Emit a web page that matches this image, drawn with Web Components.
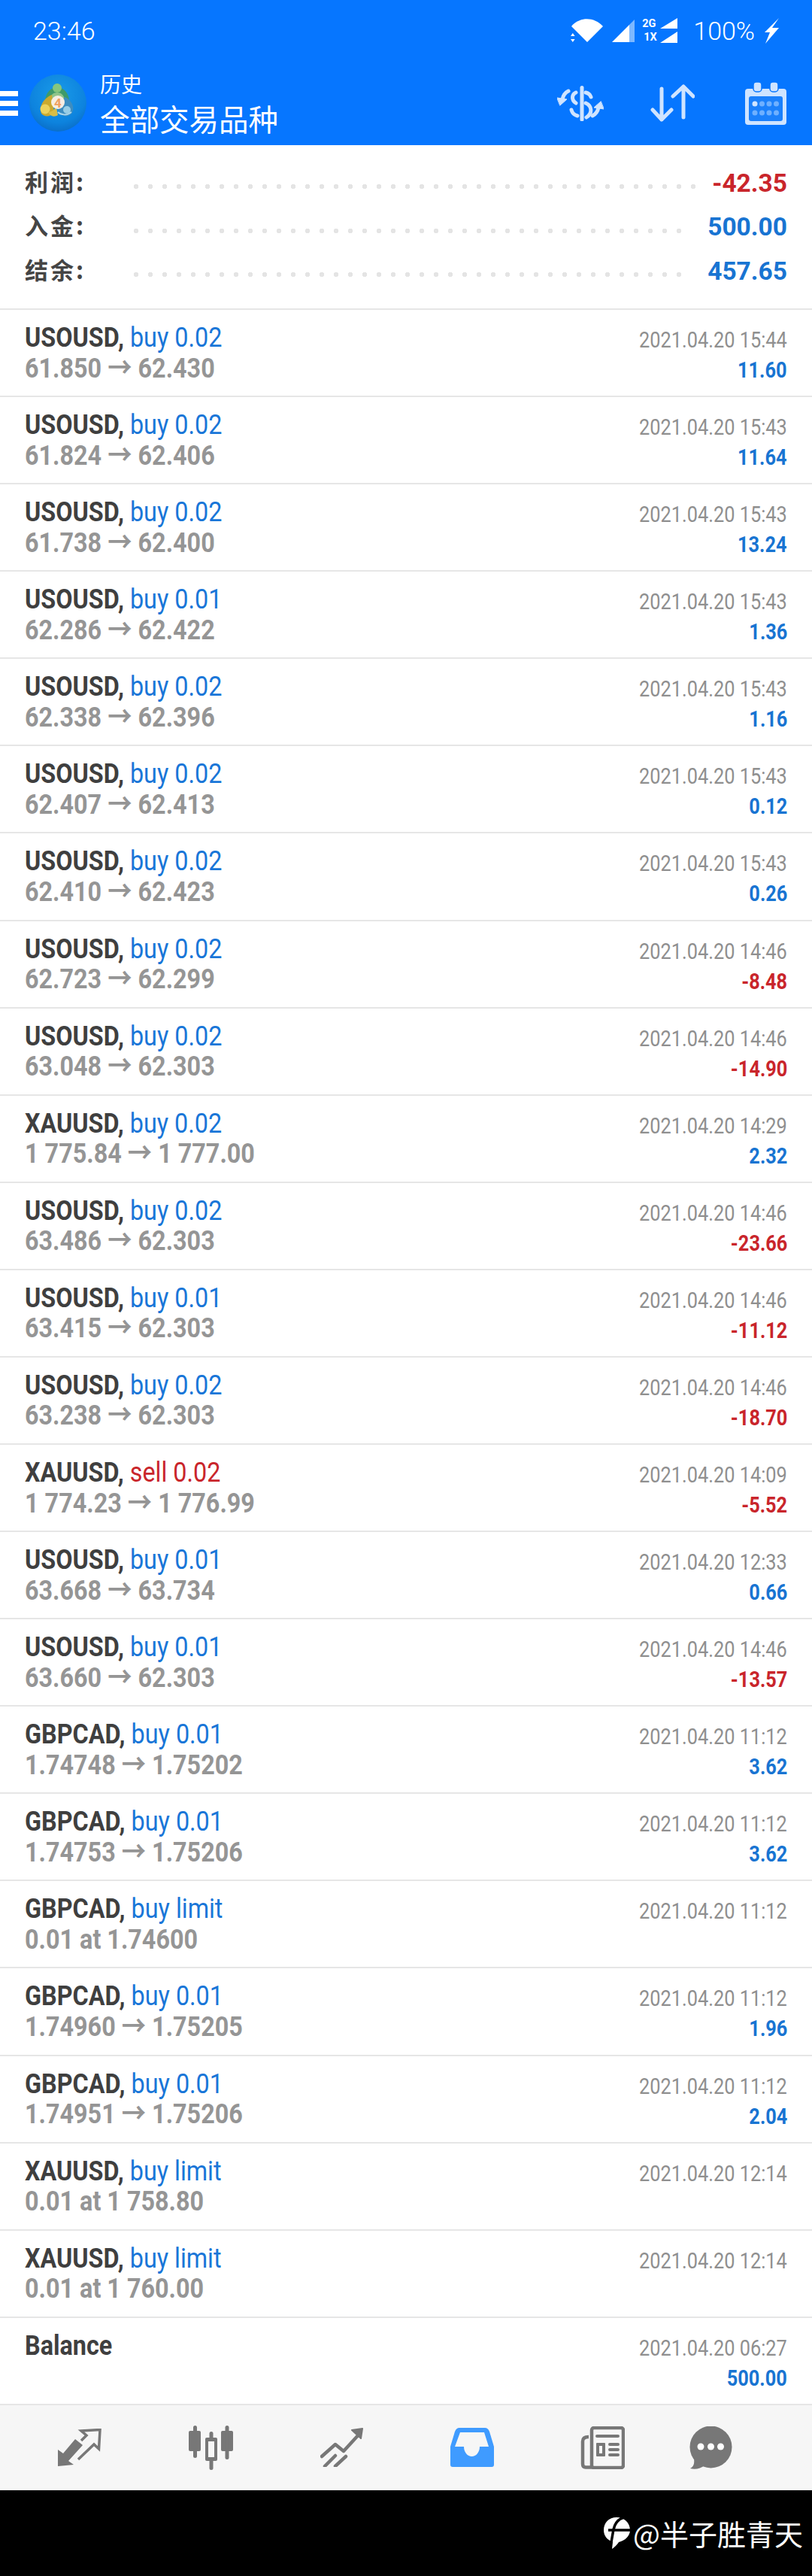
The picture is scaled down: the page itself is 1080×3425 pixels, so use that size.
<!DOCTYPE html>
<html>
<head>
<meta charset="utf-8">
<style>
  html, body { margin: 0; padding: 0; background: #fff; }
  body { width: 1080px; height: 3425px; overflow: hidden; font-family: Roboto, "Noto Sans CJK SC", sans-serif; }
</style>
</head>
<body>
<app-header></app-header>
<summary-box>
  <summary-row label="利润:" value="-42.35" dots="40" loss></summary-row>
  <summary-row label="入金:" value="500.00" dots="39"></summary-row>
  <summary-row label="结余:" value="457.65" dots="39"></summary-row>
</summary-box>
<trade-row symbol="USOUSD" action="buy 0.02" prices="61.850 → 62.430" time="2021.04.20 15:44" profit="11.60"></trade-row>
<trade-row symbol="USOUSD" action="buy 0.02" prices="61.824 → 62.406" time="2021.04.20 15:43" profit="11.64"></trade-row>
<trade-row symbol="USOUSD" action="buy 0.02" prices="61.738 → 62.400" time="2021.04.20 15:43" profit="13.24"></trade-row>
<trade-row symbol="USOUSD" action="buy 0.01" prices="62.286 → 62.422" time="2021.04.20 15:43" profit="1.36"></trade-row>
<trade-row symbol="USOUSD" action="buy 0.02" prices="62.338 → 62.396" time="2021.04.20 15:43" profit="1.16"></trade-row>
<trade-row symbol="USOUSD" action="buy 0.02" prices="62.407 → 62.413" time="2021.04.20 15:43" profit="0.12"></trade-row>
<trade-row symbol="USOUSD" action="buy 0.02" prices="62.410 → 62.423" time="2021.04.20 15:43" profit="0.26"></trade-row>
<trade-row symbol="USOUSD" action="buy 0.02" prices="62.723 → 62.299" time="2021.04.20 14:46" profit="-8.48"></trade-row>
<trade-row symbol="USOUSD" action="buy 0.02" prices="63.048 → 62.303" time="2021.04.20 14:46" profit="-14.90"></trade-row>
<trade-row symbol="XAUUSD" action="buy 0.02" prices="1 775.84 → 1 777.00" time="2021.04.20 14:29" profit="2.32"></trade-row>
<trade-row symbol="USOUSD" action="buy 0.02" prices="63.486 → 62.303" time="2021.04.20 14:46" profit="-23.66"></trade-row>
<trade-row symbol="USOUSD" action="buy 0.01" prices="63.415 → 62.303" time="2021.04.20 14:46" profit="-11.12"></trade-row>
<trade-row symbol="USOUSD" action="buy 0.02" prices="63.238 → 62.303" time="2021.04.20 14:46" profit="-18.70"></trade-row>
<trade-row symbol="XAUUSD" action="sell 0.02" prices="1 774.23 → 1 776.99" time="2021.04.20 14:09" profit="-5.52"></trade-row>
<trade-row symbol="USOUSD" action="buy 0.01" prices="63.668 → 63.734" time="2021.04.20 12:33" profit="0.66"></trade-row>
<trade-row symbol="USOUSD" action="buy 0.01" prices="63.660 → 62.303" time="2021.04.20 14:46" profit="-13.57"></trade-row>
<trade-row symbol="GBPCAD" action="buy 0.01" prices="1.74748 → 1.75202" time="2021.04.20 11:12" profit="3.62"></trade-row>
<trade-row symbol="GBPCAD" action="buy 0.01" prices="1.74753 → 1.75206" time="2021.04.20 11:12" profit="3.62"></trade-row>
<trade-row symbol="GBPCAD" action="buy limit" prices="0.01 at 1.74600" time="2021.04.20 11:12"></trade-row>
<trade-row symbol="GBPCAD" action="buy 0.01" prices="1.74960 → 1.75205" time="2021.04.20 11:12" profit="1.96"></trade-row>
<trade-row symbol="GBPCAD" action="buy 0.01" prices="1.74951 → 1.75206" time="2021.04.20 11:12" profit="2.04"></trade-row>
<trade-row symbol="XAUUSD" action="buy limit" prices="0.01 at 1 758.80" time="2021.04.20 12:14"></trade-row>
<trade-row symbol="XAUUSD" action="buy limit" prices="0.01 at 1 760.00" time="2021.04.20 12:14"></trade-row>
<trade-row balance symbol="Balance" time="2021.04.20 06:27" profit="500.00"></trade-row>
<tab-bar></tab-bar>
<water-mark>@半子胜青天</water-mark>

<script>
class AppHeader extends HTMLElement {
    constructor () {
        super();
        this.attachShadow({ mode: 'open' });
        this.shadowRoot.innerHTML = `
            <style>
                :host { display: block; height: 193px; background: #0676ff; color: #fff; }
                svg { display: block; flex: none; }
                .status { height: 81px; display: flex; align-items: center; padding: 0 44px; justify-content: space-between;
                    font: 300 34px Roboto, sans-serif; }
                .status-right { display: flex; align-items: center; }
                .nets { display: flex; flex-direction: column; width: 24px; margin-left: 10px; font: 700 14.500px/18px Roboto, sans-serif; }
                .nets span:last-child { padding-left: 2px; }
                .tool { height: 112px; display: flex; align-items: center; padding-right: 34px; }
                .burger { width: 24px; height: 33px; margin-right: 15px; flex: none;
                    background: linear-gradient(#fff 7px, transparent 7px 13px, #fff 13px 20px, transparent 20px 26px, #fff 26px); }
                .title { margin-left: 18px; font-family: "Noto Sans CJK SC", sans-serif; display: flex; flex-direction: column; }
                .small { font-size: 28px; line-height: 38px; }
                .big { font-size: 39.500px; line-height: 50px; margin-top: 2px; }
                .actions { margin-left: auto; display: flex; align-items: center; }
            </style>
            <div class="status">
                <span>23:46</span>
                <div class="status-right">
                    <svg width="43" height="32" viewBox="0 0 43 32" fill="#fff">
                        <path d="M1 10 C12 -3 31 -3 43 10 L22 31 L8 17Z"/>
                        <path d="M2.800 19 l2.800 4 h-5.600z M2.800 31 l2.800 -4 h-5.600z"/>
                    </svg>
                    <svg style="margin-left:12px" width="30" height="32" viewBox="0 0 30 32">
                        <path d="M0 31 L23 8 V31Z" fill="#fff"/>
                        <path d="M23 8 L30 1 V31 H23Z" fill="#7db8ff"/>
                    </svg>
                    <div class="nets"><span>2G</span><span>1X</span></div>
                    <svg width="23" height="34" viewBox="0 0 23 34" fill="#fff">
                        <path d="M0 14 L23 0 V14Z M0 33 L23 18 V33Z"/>
                    </svg>
                    <span style="margin-left:21px">100%</span>
                    <svg style="margin-left:13px" width="19" height="34" viewBox="0 0 19 34" fill="#fff">
                        <path d="M19 0 L10 13 H19 L1 34 L7 19 H0Z"/>
                    </svg>
                </div>
            </div>
            <div class="tool">
                <div class="burger"></div>
                <svg width="76" height="76" viewBox="0 0 76 76">
                    <defs>
                        <radialGradient id="lg" cx=".5" cy=".35" r=".7">
                            <stop offset="0" stop-color="#1a9be8"/>
                            <stop offset=".7" stop-color="#0d83de"/>
                            <stop offset="1" stop-color="#0a69c2"/>
                        </radialGradient>
                    </defs>
                    <circle cx="38" cy="38" r="38" fill="url(#lg)"/>
                    <path d="M21 34 C22 24 29 17 37 17 C45 17 52 24 53 34 L48 36 L27 36Z" fill="#3f9a6a"/>
                    <path d="M27 34 C28 27 32 24 37 24 C42 24 46 27 47 34Z" fill="#8fc48a"/>
                    <circle cx="37" cy="18" r="6" fill="#86c67e"/>
                    <path d="M16 52 C12 42 20 31 30 27 L33 50 C28 57 20 57 16 52Z" fill="#caa92f"/>
                    <circle cx="21" cy="46" r="6.500" fill="#ecd25c"/>
                    <path d="M25 50 C31 50 33 46 36 44 L38 54 C33 57 28 56 25 50Z" fill="#d9bd45"/>
                    <path d="M38 46 L47 30 C57 34 62 46 55 53 C49 58 41 55 38 46Z" fill="#3d8dc0"/>
                    <circle cx="50" cy="47" r="5" fill="#98cde6"/>
                    <path d="M38 50 C42 54 50 55 56 50" stroke="#a9d4e8" stroke-width="2" fill="none"/>
                    <circle cx="38" cy="37" r="9" fill="#f6ede2"/>
                    <text x="38" y="43.500" text-anchor="middle" font-family="Roboto, sans-serif" font-size="17" font-weight="700" fill="#f0a060">4</text>
                </svg>
                <div class="title">
                    <span class="small">历史</span>
                    <span class="big">全部交易品种</span>
                </div>
                <div class="actions">
                    <svg width="62" height="47" viewBox="0 0 62 47" fill="none" stroke="#cfe4ff" stroke-width="5" stroke-linecap="round">
                        <path d="M33 2.500 V45"/>
                        <path d="M25 9 C19 12 19 19 25 23"/>
                        <path d="M38 9 C42 10 44 12 45 15"/>
                        <path d="M38 23 C47 27 47 37 39 42"/>
                        <path d="M19 32 C20 36 23 39 27 40"/>
                        <path d="M15 7 C11 9 8 13 7 18"/>
                        <path d="M0 16 L13 18 L4 26Z" fill="#cfe4ff" stroke-width="1"/>
                        <path d="M47 40 C51 38 54 34 55 29"/>
                        <path d="M62 31 L49 29 L58 21Z" fill="#cfe4ff" stroke-width="1"/>
                    </svg>
                    <svg style="margin-left:62px" width="59" height="50" viewBox="0 0 59 50" fill="none" stroke="#cfe4ff" stroke-width="5" stroke-linecap="round" stroke-linejoin="round">
                        <path d="M15 6 V47 M3 34 L15 47 L28 34"/>
                        <path d="M44 3 V44 M30 16 L44 3 L57 16"/>
                    </svg>
                    <svg style="margin-left:67px" width="55" height="57" viewBox="0 0 55 57">
                        <rect x="0" y="9" width="55" height="48" rx="4" fill="#cfe4ff"/>
                        <rect x="5" y="19" width="45" height="33" rx="3" fill="#1b80fb"/>
                        <rect x="11" y="0" width="11" height="13" rx="4" fill="#cfe4ff" stroke="#0676ff" stroke-width="1.500"/>
                        <rect x="33" y="0" width="11" height="13" rx="4" fill="#cfe4ff" stroke="#0676ff" stroke-width="1.500"/>
                        <circle cx="13" cy="29" r="3.500" fill="#cfe4ff"/>
                        <g fill="#6fb0ff">
                            <circle cx="22.500" cy="29" r="3.500"/><circle cx="32" cy="29" r="3.500"/><circle cx="41.500" cy="29" r="3.500"/>
                            <circle cx="13" cy="41" r="3.500"/><circle cx="22.500" cy="41" r="3.500"/><circle cx="32" cy="41" r="3.500"/><circle cx="41.500" cy="41" r="3.500"/>
                        </g>
                    </svg>
                </div>
            </div>
        `;
    }
}

class SummaryBox extends HTMLElement {
    constructor () {
        super();
        this.attachShadow({ mode: 'open' });
        this.shadowRoot.innerHTML = `
            <style>
                :host { display: block; height: 217px; box-sizing: border-box; padding-top: 21px; }
            </style>
            <slot></slot>
        `;
    }
}

class SummaryRow extends HTMLElement {
    constructor () {
        super();
        this.attachShadow({ mode: 'open' });
        this.shadowRoot.innerHTML = `
            <style>
                :host { display: flex; height: 58.500px; align-items: center; padding: 0 33px; }
                .label { width: 145px; flex: none; margin-bottom: 6px; font: 700 31px "Noto Sans CJK SC", sans-serif; letter-spacing: 3px; color: #454545; }
                .dots { height: 6px; margin-top: 10px; background: radial-gradient(circle at 3px 3px, #e4e4e4 3px, transparent 3.500px) 0 0 / 19px 6px repeat-x; }
                .value { margin-left: auto; font: 700 33.500px Roboto, sans-serif; color: #1874d2; }
                :host([loss]) .value { color: #c9252b; }
            </style>
            <div class="label"></div>
            <div class="dots"></div>
            <div class="value"></div>
        `;
    }
    connectedCallback() {
        this.shadowRoot.querySelector('.label').textContent = this.getAttribute('label');
        this.shadowRoot.querySelector('.value').textContent = this.getAttribute('value');
        this.shadowRoot.querySelector('.dots').style.width = (this.getAttribute('dots') * 19) + 'px';
    }
}

class TradeRow extends HTMLElement {
    constructor () {
        super();
        this.attachShadow({ mode: 'open' });
        this.shadowRoot.innerHTML = `
            <style>
                :host { display: flex; justify-content: space-between; height: 116.080px; box-sizing: border-box;
                    border-top: 2px solid #e6e6e6; padding: 17px 33px 0; overflow: hidden; }
                .left, .right { display: flex; flex-direction: column; }
                .right { align-items: flex-end; padding-top: 3px; }
                .line { white-space: nowrap; display: inline-block; }
                .left .line { font-size: 37px; line-height: 40.500px; transform-origin: left center; transform: scaleX(.874); }
                .right .line { font-size: 30px; line-height: 40px; transform-origin: right center; transform: scaleX(.845); }
                .symbol { font-weight: 700; color: #3f3f3f; }
                .action { color: #1976d8; }
                .action.sell { color: #c9252b; }
                .prices { font-weight: 700; color: #959595; }
                .time { color: #8f8f8f; }
                .profit { font-weight: 700; color: #1874d2; }
                .profit.loss { color: #c9252b; }
            </style>
            <div class="left">
                <div class="line"><span class="symbol"></span><span class="action"></span></div>
                <div class="line prices"></div>
            </div>
            <div class="right">
                <div class="line time"></div>
                <div class="line profit"></div>
            </div>
        `;
    }
    connectedCallback() {
        const root = this.shadowRoot;
        const action = this.getAttribute('action');
        const profit = this.getAttribute('profit') || '';
        root.querySelector('.symbol').textContent = this.getAttribute('symbol') + (action ? ', ' : '');
        const act = root.querySelector('.action');
        act.textContent = action || '';
        if (action && action.startsWith('sell')) act.classList.add('sell');
        root.querySelector('.prices').textContent = this.getAttribute('prices') || '';
        root.querySelector('.time').textContent = this.getAttribute('time');
        const p = root.querySelector('.profit');
        p.textContent = profit;
        if (profit.startsWith('-')) p.classList.add('loss');
    }
}

class TabBar extends HTMLElement {
    constructor () {
        super();
        this.attachShadow({ mode: 'open' });
        this.shadowRoot.innerHTML = `
            <style>
                :host { display: flex; align-items: center; box-sizing: border-box; height: 115px; background: #f6f6f6;
                    border-top: 2px solid #e6e6e6; padding-left: 77px; gap: 116px; }
                svg { display: block; flex: none; }
            </style>
            <svg width="58" height="50" viewBox="0 0 58 50">
                <path d="M0 28 L7 33 L23 14 L33 22 L14 43 L21 48 L0 50Z" fill="#777"/>
                <path d="M31 16 L38 9 L31 3 L56 1.500 L54.500 27 L48 21 L27 41" fill="none" stroke="#777" stroke-width="3.500"/>
            </svg>
            <svg width="59" height="59" viewBox="0 0 59 59" fill="#777">
                <rect x="0" y="7" width="16" height="27" rx="2"/><rect x="6" y="0" width="5" height="43" rx="2.500"/>
                <rect x="43" y="7" width="16" height="27" rx="2"/><rect x="48.500" y="0" width="5" height="45" rx="2.500"/>
                <rect x="22" y="16" width="16" height="31" rx="2"/><rect x="27.500" y="8" width="5" height="51" rx="2.500"/>
                <rect x="26" y="21" width="8" height="21" fill="#f6f6f6"/>
            </svg>
            <svg width="57" height="52" viewBox="0 0 57 52" fill="none" stroke="#777" stroke-width="4.500" stroke-linecap="round" stroke-linejoin="round">
                <path d="M2 38 L20 22 L31 31 L53 7"/>
                <path d="M42 3 L56 1 L54 14Z" fill="#777" stroke-width="2"/>
                <path d="M6 51 L20 37 M20 51 L34 38"/>
            </svg>
            <svg width="58" height="52" viewBox="0 0 58 52">
                <path d="M12 0 H46 Q50 0 52 5 L58 25 V49 Q58 52 55 52 H3 Q0 52 0 49 V25 L6 5 Q8 0 12 0Z" fill="#3f9bff"/>
                <path d="M13 6 H45 L51 25 H39 A10.500 13 0 0 1 18 25 H6Z" fill="#f6f6f6"/>
            </svg>
            <svg style="margin-left:-1px" width="59" height="57" viewBox="0 0 59 57">
                <rect x="15" y="2" width="42" height="53" rx="3" fill="none" stroke="#777" stroke-width="4.500"/>
                <path d="M11 14 Q3 14 3 20 V50 Q3 54.500 7 54.500 H17" fill="none" stroke="#777" stroke-width="4.500"/>
                <path d="M22 13 H50 M39 24 H50 M39 31 H50 M39 38 H50" stroke="#777" stroke-width="4" stroke-linecap="round"/>
                <rect x="21" y="22" width="12" height="18" rx="1" fill="#777"/>
                <rect x="25" y="26" width="4" height="10" fill="#f6f6f6"/>
            </svg>
            <svg style="margin-left:-30px" width="57" height="57" viewBox="0 0 57 57">
                <circle cx="28.500" cy="27.500" r="28" fill="#777"/>
                <path d="M6 44 C7 50 5 54 1 56 C8 58 15 56 20 52Z" fill="#777"/>
                <circle cx="15" cy="27" r="4.500" fill="#fff"/><circle cx="28.500" cy="27" r="4.500" fill="#fff"/><circle cx="41.500" cy="27" r="4.500" fill="#fff"/>
            </svg>
        `;
    }
}

class WaterMark extends HTMLElement {
    constructor () {
        super();
        this.attachShadow({ mode: 'open' });
        this.shadowRoot.innerHTML = `
            <style>
                :host { display: flex; align-items: center; justify-content: flex-end; box-sizing: border-box; height: 114px;
                    background: #000; color: #fff; padding-right: 12px;
                    font: 38px "Noto Sans CJK SC", sans-serif; }
                svg { display: block; margin-right: 4px; }
            </style>
            <svg width="35" height="42" viewBox="0 0 35 42">
                <path d="M17 0 C27 0 35 7 35 17 C35 25 28 31 20 33 C18 36 14 40 11 42 L12 33 C5 30 0 25 0 17 C0 7 7 0 17 0Z" fill="#fff"/>
                <path d="M27 0 C20 2 15 7 13 16 L10 33 M6 17 H35" fill="none" stroke="#000" stroke-width="3.500"/>
            </svg>
            <slot></slot>
        `;
    }
}

customElements.define('app-header', AppHeader);
customElements.define('summary-box', SummaryBox);
customElements.define('summary-row', SummaryRow);
customElements.define('trade-row', TradeRow);
customElements.define('tab-bar', TabBar);
customElements.define('water-mark', WaterMark);
</script>
</body>
</html>
